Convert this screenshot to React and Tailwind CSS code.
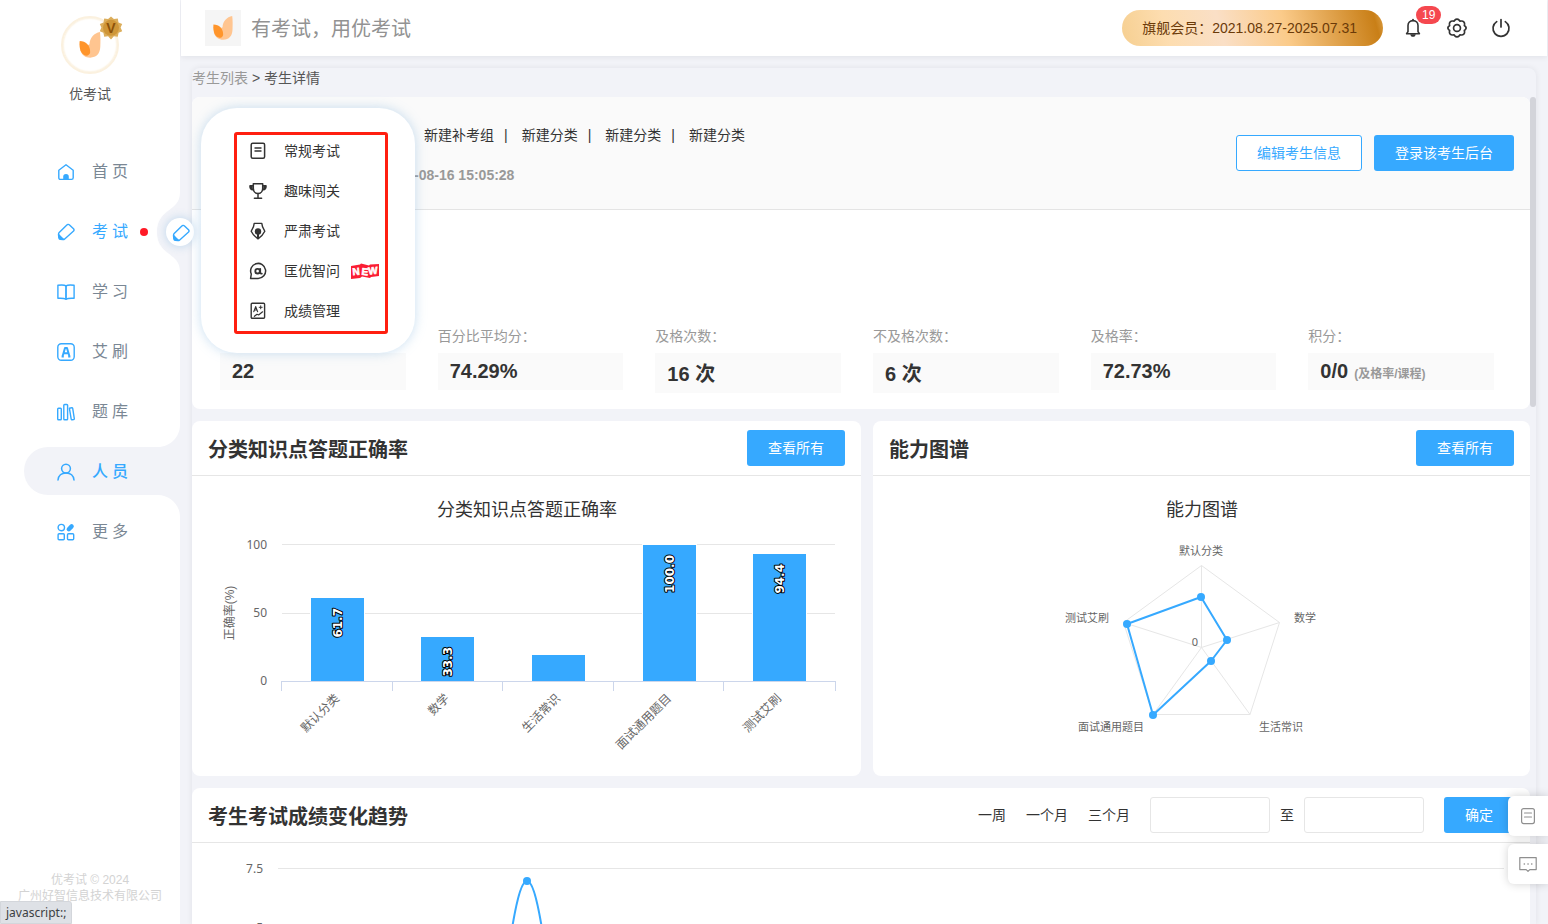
const navItems = [
  { id: 'home', label: '首页', icon: HomeIcon },
  { id: 'exam', label: '考试', icon: TagIcon },
  { id: 'study', label: '学习', icon: BookIcon },
  { id: 'aishua', label: '艾刷', icon: LetterIcon },
  { id: 'bank', label: '题库', icon: LibraryIcon },
  { id: 'people', label: '人员', icon: UserIcon },
  { id: 'more', label: '更多', icon: MoreIcon },
];

const menuItems = [
  { label: '常规考试', icon: PaperIcon },
  { label: '趣味闯关', icon: TrophyIcon },
  { label: '严肃考试', icon: NibIcon },
  { label: '匡优智问', icon: AskIcon, isNew: true },
  { label: '成绩管理', icon: GradeIcon },
];

const stats = [
  { label: '', value: '22' },
  { label: '百分比平均分：', value: '74.29%' },
  { label: '及格次数：', value: '16 次' },
  { label: '不及格次数：', value: '6 次' },
  { label: '及格率：', value: '72.73%' },
  { label: '积分：', value: '0/0', note: '(及格率/课程)' },
];

const bars = [
  { name: '默认分类', x: 119, top: 122, value: '61.7' },
  { name: '数学', x: 229, top: 161, value: '33.3' },
  { name: '生活常识', x: 340, top: 179, value: '' },
  { name: '面试通用题目', x: 451, top: 69, value: '100.0' },
  { name: '测试艾刷', x: 561, top: 78, value: '94.4' },
];

const tickXs = [89.5, 200.5, 310.5, 421.5, 531.5, 643.5];

const radarCorners = [[328.5, 89.5], [406.5, 146.5], [377, 238.5], [280, 238.5], [250.5, 146.5]];
const radarPoints = [[328, 121], [354, 164], [338, 185], [280, 239], [254, 148]];

/* ---------- icons ---------- */

function Line({ children, size = 18, width = 1.4 }) {
  return (
    <svg width={size} height={size} viewBox="0 0 18 18" fill="none" stroke="currentColor" strokeWidth={width} strokeLinecap="round" strokeLinejoin="round" className="shrink-0" aria-hidden="true">
      {children}
    </svg>
  );
}

function HomeIcon() {
  return (
    <Line>
      <path d="M1.8 7.2 9 1.8l7.2 5.4v7.6c0 1-.6 1.6-1.6 1.6H3.4c-1 0-1.6-.6-1.6-1.6z" />
      <path d="M6.2 16.4v-2.6a2.8 2.8 0 0 1 5.6 0v2.6z" fill="currentColor" stroke="none" />
    </Line>
  );
}

function TagIcon() {
  return (
    <Line>
      <path d="M9.6 2.3 2.2 9.6c-.6.6-.7 1.3-.7 2l.4 3.3c.1.9.6 1.4 1.5 1.5l2.4.2c.7 0 1.3-.1 1.9-.7l8.6-7.6c.9-.8.9-1.700.2-2.500l-4-3.900c-.8-.8-2-.8-2.900.4z" />
      <path d="M1.500 10.300c1.600 2 3.600 4.200 6 6-1.600.9-3.200 1-4.600.4C1.300 16 1 13 1.500 10.300z" fill="currentColor" stroke="none" />
    </Line>
  );
}

function BookIcon() {
  return (
    <Line>
      <path d="M9 2.800C7.800 2 4.500 1.800 .9 2.200V15.300c3.600-.2 6.600 0 8.100.9 1.500-.9 4.500-1.100 8.100-.9V2.200C13.500 1.800 10.200 2 9 2.800z" />
      <path d="M9 2.800v13.200" strokeWidth="1.800" />
    </Line>
  );
}

function LetterIcon() {
  return (
    <Line>
      <rect x="0.800" y="0.800" width="16.400" height="16.400" rx="3.500" />
      <path d="M5.600 13.200 8 5h2l2.400 8.200M6.800 10.200h4.400M4.600 13.400h2.200M11.200 13.400h2.200" strokeWidth="2" strokeLinecap="butt" />
    </Line>
  );
}

function LibraryIcon() {
  return (
    <Line width={1.4}>
      <rect x="0.700" y="5.200" width="3.600" height="11.500" rx="0.800" />
      <rect x="6.800" y="1.500" width="3.800" height="15.200" rx="0.800" />
      <path d="m12.400 5.300 2.400-.5c.5-.1.800.1.900.6l1.600 10.200c.1.500-.1.800-.6.900l-1.600.2c-.5.100-.8-.1-.9-.6L12.400 5.300z" />
    </Line>
  );
}

function UserIcon() {
  return (
    <Line width={1.5}>
      <circle cx="9" cy="5.600" r="4.400" />
      <path d="M1 17c.5-4.200 3.500-7 8-7s7.500 2.800 8 7" />
    </Line>
  );
}

function MoreIcon() {
  return (
    <Line>
      <circle cx="4.300" cy="4.600" r="3.200" />
      <rect x="1.100" y="10.700" width="6.200" height="6" rx="1" />
      <rect x="10.500" y="10.700" width="6.200" height="6" rx="1" />
      <path d="m11.800 6.200 2.800-2.800" strokeWidth="4.400" />
    </Line>
  );
}

function PaperIcon() {
  return (
    <Line width={1.5}>
      <rect x="2.200" y="1.300" width="13.400" height="15" rx="1.500" />
      <path d="M5.500 6h7M5.500 9h7" strokeLinecap="butt" />
    </Line>
  );
}

function TrophyIcon() {
  return (
    <Line width={1.5}>
      <path d="M4.300 1.800h9.400v4.400c0 3-2 5.400-4.700 5.400S4.300 9.200 4.300 6.200z" />
      <path d="M9 11.600v4M5.400 16.300h7.200" />
      <path d="M3.600 3.800H1c-.2 2.200.8 3.700 2.900 4M14.400 3.800H17c.2 2.200-.8 3.700-2.900 4" fill="currentColor" />
    </Line>
  );
}

function NibIcon() {
  return (
    <Line width={1.4}>
      <path d="M5.200 1.400h7.600l.7 3.200 2.300 4.600c-1.300 2.800-3.600 5.300-6.800 7.700-3.200-2.400-5.500-4.900-6.800-7.700l2.300-4.600z" />
      <circle cx="9" cy="9.500" r="3.200" fill="currentColor" stroke="none" />
      <path d="M9 10v6" strokeWidth="2" />
    </Line>
  );
}

function AskIcon() {
  return (
    <Line width={1.5}>
      <path d="M1.600 16.400h7.600A7.500 7.500 0 1 0 2.300 12z" />
      <circle cx="8.600" cy="9.200" r="2.300" strokeWidth="1.900" />
      <path d="M11.200 6.800v3.400c0 1 .6 1.500 1.600 1.400" strokeWidth="1.800" />
    </Line>
  );
}

function GradeIcon() {
  return (
    <Line width={1.4}>
      <rect x="2.200" y="1.300" width="13.400" height="15" rx="1" />
      <path d="m4.800 9.600 1.900-5 1.900 5M5.500 8h2.500" strokeWidth="1.200" />
      <path d="M10.200 5.300h3M11.700 3.800v3" strokeWidth="1" />
      <path d="m5.400 14.300 2.600-2 1.600.7 4-3.200" strokeWidth="1.200" />
    </Line>
  );
}

function BellIcon() {
  return (
    <svg width="20" height="20" viewBox="0 0 20 20" fill="none" stroke="currentColor" strokeWidth="1.600" strokeLinejoin="round" strokeLinecap="round" aria-hidden="true">
      <path d="M10 2.600c-3.100 0-5 2.200-5 5v6L3.600 15.800h12.800L15 13.600v-6c0-2.800-1.900-5-5-5z" />
      <path d="M10 1.500v1" />
      <path d="M7.200 16.200h5.600c-.3 1.700-1.300 2.600-2.800 2.600s-2.500-.9-2.800-2.600z" fill="currentColor" stroke="none" />
    </svg>
  );
}

function GearIcon() {
  return (
    <svg width="20" height="20" viewBox="1 1 18 18" fill="none" stroke="currentColor" strokeWidth="1.500" strokeLinejoin="round" aria-hidden="true">
      <path d="M8.100 2.900a2.600 2.600 0 0 1 3.800 0l.8.9 1.300-.1a2.600 2.600 0 0 1 2.800 2.900l-.2 1.200.9.800a2 2 0 0 1 0 2.800l-.9.800.2 1.200a2.600 2.600 0 0 1-2.800 2.900l-1.300-.1-.8.900a2.600 2.600 0 0 1-3.800 0l-.8-.9-1.300.1a2.600 2.600 0 0 1-2.800-2.900l.2-1.200-.9-.8a2 2 0 0 1 0-2.800l.9-.8-.2-1.200A2.600 2.600 0 0 1 6 3.700l1.300.1z" />
      <circle cx="10" cy="10" r="3.100" />
    </svg>
  );
}

function PowerIcon() {
  return (
    <svg width="20" height="20" viewBox="0 0 20 20" fill="none" stroke="currentColor" strokeWidth="1.700" strokeLinecap="round" aria-hidden="true">
      <path d="M10 1.500v7.500M5.700 3.600a8 8 0 1 0 8.600 0" />
    </svg>
  );
}

function Petals({ className }) {
  return (
    <svg viewBox="0 0 63 77" className={className} aria-hidden="true">
      <path d="M61 0C44 3 31 17 30 36L2 52c5 18 16 24 30 24 19 0 29-12 30-32 .6-14 1-30-1-44z" fill="#ffc590" />
      <path d="M1 27c18 0 31 13 31 32 0 6-5 11-12 11C6 68-2 50 1 27z" fill="#ff952b" />
    </svg>
  );
}

function Medal() {
  return (
    <svg width="24" height="24" viewBox="0 0 24 24" className="absolute -right-1.5 -top-0.5" aria-hidden="true">
      <path d="m12 .5 2.900 2.600 3.900-.5.700 3.900 3.700 1.400-1.600 3.600 1.600 3.800-3.600 1.500-.8 3.900-3.900-.4L12 23.500l-2.900-3.200-3.900.4-.8-3.900L.8 15.300l1.600-3.800L.8 7.900l3.700-1.400.7-3.900 3.900.5z" fill="#dcae5c" />
      <circle cx="12" cy="11.800" r="8" fill="#cf9638" />
      <text x="12" y="17" textAnchor="middle" fontSize="14" fontWeight="700" fill="#8c5209">V</text>
    </svg>
  );
}

function NewBadge() {
  return (
    <svg width="30" height="18" viewBox="0 0 30 18" role="img" aria-label="NEW">
      <path d="m1 4 9-1.500 1-1 8 2 1-1 9-.5v12l-8 1-1 1-8-1.500-2 1.500-9 1z" fill="#fb1d33" />
      <g fill="#fff" stroke="#fff" strokeWidth="0.600" fontSize="10" fontWeight="700" textAnchor="middle" className="font-['Liberation_Sans',sans-serif]">
        <text x="6" y="13" transform="rotate(-5 6 9)">N</text>
        <text x="15" y="13" transform="rotate(6 15 9)">E</text>
        <text x="23" y="12" transform="rotate(-5 23 9)">W</text>
      </g>
    </svg>
  );
}

/* ---------- sidebar ---------- */

function ExamMenu() {
  return (
    <div className="absolute -top-[99px] left-[201px] h-[245px] w-[214px] rounded-[36px] bg-white px-[33px] py-6 shadow-[0_0_12px_rgba(120,175,220,0.400)]">
      <ul className="w-[154px] rounded-[3px] border-3 border-[#ff1f10]">
        {menuItems.map(({ label, icon: Icon, isNew }) => (
          <li key={label} className="h-10 first:-mt-1">
            <a href="#menu" className="flex h-full items-center pl-3 text-sm text-[#333]">
              <Icon />
              <span className="ml-[17px] mr-2.5">{label}</span>
              {isNew && <NewBadge />}
            </a>
          </li>
        ))}
      </ul>
    </div>
  );
}

function ExamKnob() {
  return (
    <>
      <svg width="24" height="80" viewBox="0 0 24 80" className="absolute -top-[15px] right-0" aria-hidden="true">
        <path d="M24 0c0 11-6 14-12 19C4 25 1 31 1 40s3 15 11 21c6 5 12 8 12 19z" fill="#f2f3f8" />
      </svg>
      <span className="absolute -right-3.5 top-[11px] flex size-7 items-center justify-center rounded-full bg-white pl-0.5 pt-0.5 text-[#36a9ff] shadow-[0_0_10px_rgba(120,175,220,0.450)]">
        <TagIcon />
      </span>
    </>
  );
}

function ActiveCorners() {
  return (
    <>
      <svg width="22" height="22" viewBox="0 0 22 22" className="absolute -top-[22px] right-0" aria-hidden="true">
        <path d="M22 0v22H0C12 22 22 12 22 0z" fill="#f2f3f8" />
      </svg>
      <svg width="22" height="22" viewBox="0 0 22 22" className="absolute -bottom-[22px] right-0" aria-hidden="true">
        <path d="M22 22V0H0c12 0 22 10 22 22z" fill="#f2f3f8" />
      </svg>
    </>
  );
}

function Sidebar() {
  return (
    <aside className="relative z-10 flex w-[180px] shrink-0 flex-col bg-white">
      <div className="flex flex-col items-center pt-4">
        <div className="relative flex size-[58px] items-center justify-center rounded-full border-2 border-[#fbf1df] shadow-[inset_0_0_2px_#f5dfb8]">
          <Petals className="h-[26px] w-[22px]" />
          <Medal />
        </div>
        <p className="mt-2.5 text-sm leading-5 text-[#555]">优考试</p>
      </div>

      <nav className="mt-[43px] flex flex-col gap-3">
        {navItems.map(({ id, label, icon: Icon }) => (
          <div key={id} className="relative h-12">
            <a
              href={`#${id}`}
              className={
                'ml-6 flex h-full items-center rounded-l-full pl-[33px] pt-0.5 tracking-[4px] ' +
                (id === 'people' ? 'bg-[#f2f3f8] font-medium text-[#36a9ff]' : id === 'exam' ? 'text-[#36a9ff]' : 'text-[#7a8794]')
              }
            >
              <span className="mr-[17px] text-[#36a9ff]"><Icon /></span>
              {label}
              {id === 'exam' && <span className="ml-2 size-2 rounded-full bg-[#ff1a26]" />}
            </a>
            {id === 'exam' && <ExamKnob />}
            {id === 'exam' && <ExamMenu />}
            {id === 'people' && <ActiveCorners />}
          </div>
        ))}
      </nav>

      <footer className="mt-auto pb-5 text-center text-xs text-[#d3d3d3]">
        <p>优考试 © 2024</p>
        <p>广州好智信息技术有限公司</p>
      </footer>
      <div className="fixed bottom-0 left-0 rounded-tr-[3px] border border-[#d3d6db] bg-[#dee1e6] px-[5px] pb-0.5 pt-[3px] font-['Noto_Sans',sans-serif] text-xs text-[#3c4043]">
        javascript:;
      </div>
    </aside>
  );
}

/* ---------- header ---------- */

function Header() {
  return (
    <header className="relative mx-px flex h-14 shrink-0 items-center bg-white pl-6 pr-9 shadow-[0_1px_6px_rgba(0,21,41,0.080)]">
      <div className="flex size-9 items-center justify-center bg-[#f5f5f5]">
        <Petals className="h-6 w-5" />
      </div>
      <h1 className="ml-2.5 pt-0.5 text-xl text-[#929292]">有考试，用优考试</h1>
      <div className="ml-auto rounded-full bg-[linear-gradient(75deg,#f6cf90_0%,#fdddb0_18%,#fadfc6_38%,#fbcb8a_62%,#c97f17_96%,#dda24a_100%)] py-2 pl-5 pr-[26px] text-sm leading-5 text-[#6b3a08]">
        旗舰会员：2021.08.27-2025.07.31
      </div>
      <div className="ml-5 flex gap-6 text-[#333]">
        <button type="button" className="relative" aria-label="消息">
          <BellIcon />
          <span className="absolute -top-3 left-[13px] rounded-full bg-[#f5484f] px-[6px] text-xs leading-[18px] text-white">19</span>
        </button>
        <button type="button" aria-label="设置"><GearIcon /></button>
        <button type="button" aria-label="退出"><PowerIcon /></button>
      </div>
    </header>
  );
}

/* ---------- content ---------- */

function CardHeader({ title, children }) {
  return (
    <div className="flex h-[55px] items-center justify-between border-b border-[#e6e6e6] px-4">
      <h2 className="pt-1 text-xl font-bold text-[#333]">{title}</h2>
      {children}
    </div>
  );
}

function PrimaryButton({ children }) {
  return (
    <button type="button" className="h-9 rounded-[3px] bg-[#36a9ff] px-[21px] text-sm text-white">
      {children}
    </button>
  );
}

function StudentCard() {
  return (
    <section className="overflow-hidden rounded-lg bg-white">
      <div className="flex h-[113px] items-start justify-between border-b border-[#e4e4e4] bg-[#fafafa] pl-[222px] pr-4">
        <div className="pt-7 text-sm text-[#333]">
          <p className="flex pl-2.5">
            <span>新建补考组</span>
            <span className="ml-2.5 mr-3.5">|</span>
            <span>新建分类</span>
            <span className="ml-2.5 mr-3.5">|</span>
            <span>新建分类</span>
            <span className="ml-2.5 mr-3.5">|</span>
            <span>新建分类</span>
          </p>
          <p className="mt-5 font-bold text-[#999]">-08-16 15:05:28</p>
        </div>
        <div className="flex gap-3 pt-[38px]">
          <button type="button" className="h-9 rounded-[3px] border border-[#36a9ff] bg-white px-5 text-sm text-[#36a9ff]">
            编辑考生信息
          </button>
          <PrimaryButton>登录该考生后台</PrimaryButton>
        </div>
      </div>
      <dl className="grid h-[199px] grid-cols-6 px-4 pt-[116px]">
        {stats.map(({ label, value, note }) => (
          <div key={value} className="pl-3 pr-5">
            <dt className="h-5 text-sm text-[#999]">{label}</dt>
            <dd
              className={
                'mt-[7px] flex items-center bg-[#fafafa] px-3 text-xl font-bold text-[#333] ' +
                (value.includes('次') ? 'h-10 pt-0.5' : 'h-[37px] pb-0.5')
              }
            >
              {value}
              {note && <span className="ml-1.5 pt-1.5 text-xs text-[#999]">{note}</span>}
            </dd>
          </div>
        ))}
      </dl>
    </section>
  );
}

function BarChart() {
  return (
    <svg viewBox="0 0 669 300" className="h-[300px] w-full" role="img" aria-label="分类知识点答题正确率">
      <text x="335" y="40" textAnchor="middle" fontSize="18" fill="#333">分类知识点答题正确率</text>
      <path d="M90 68.500h553M90 137.500h553" stroke="#e6e6e6" />
      <g fontSize="12" fill="#666" textAnchor="end" className="font-['Noto_Sans',sans-serif]">
        <text x="75" y="73">100</text>
        <text x="75" y="141">50</text>
        <text x="75" y="209">0</text>
      </g>
      <text transform="translate(42 137) rotate(-90)" textAnchor="middle" fontSize="12" fill="#666">正确率(%)</text>
      {bars.map(({ name, x, top, value }) => (
        <g key={name}>
          <rect x={x - 1} y={top - 1} width="55" height={206 - top} fill="#fff" />
          <rect x={x} y={top} width="53" height={205 - top} fill="#36a9ff" />
          <text
            transform={`translate(${x + 31} ${top + 10}) rotate(-90)`}
            textAnchor="end"
            fontSize="12"
            fontWeight="700"
            fill="#fff"
            stroke="#000"
            strokeWidth="2"
            strokeLinejoin="round"
            paintOrder="stroke"
            className="font-['DejaVu_Sans',sans-serif]"
          >
            {value}
          </text>
          <text transform={`translate(${x + 29} 223) rotate(-45)`} textAnchor="end" fontSize="12" fill="#666">{name}</text>
        </g>
      ))}
      <path d="M89 205.500h555" stroke="#ccd6eb" />
      {tickXs.map((x) => (
        <path key={x} d={`M${x} 205v10`} stroke="#ccd6eb" />
      ))}
    </svg>
  );
}

function RadarChart() {
  return (
    <svg viewBox="0 0 657 300" className="h-[300px] w-full" role="img" aria-label="能力图谱">
      <text x="329" y="40" textAnchor="middle" fontSize="18" fill="#333">能力图谱</text>
      <g fill="none" stroke="#e6e6e6">
        <polygon points={radarCorners.join(' ')} />
        {radarCorners.map(([x, y]) => (
          <path key={x} d={`M328.500 171.500 ${x} ${y}`} />
        ))}
      </g>
      <g fontSize="11" fill="#666">
        <text x="328" y="79" textAnchor="middle">默认分类</text>
        <text x="421" y="146">数学</text>
        <text x="386" y="255">生活常识</text>
        <text x="271" y="255" textAnchor="end">面试通用题目</text>
        <text x="236" y="146" textAnchor="end">测试艾刷</text>
        <text x="325" y="170" textAnchor="end" className="font-['Noto_Sans',sans-serif]">0</text>
      </g>
      <polygon points={radarPoints.join(' ')} fill="none" stroke="#36a9ff" strokeWidth="2" strokeLinejoin="round" />
      {radarPoints.map(([x, y]) => (
        <circle key={x} cx={x} cy={y} r="4" fill="#36a9ff" />
      ))}
    </svg>
  );
}

function TrendCard() {
  return (
    <section className="mt-3 rounded-t-lg bg-white">
      <CardHeader title="考生考试成绩变化趋势">
        <form className="flex items-center text-sm text-[#333]">
          <div className="mr-5 flex gap-5">
            <button type="button">一周</button>
            <button type="button">一个月</button>
            <button type="button">三个月</button>
          </div>
          <input type="text" aria-label="开始日期" className="h-9 w-[120px] rounded-[3px] border border-[#e6e6e6] px-2" />
          <span className="mx-2.5">至</span>
          <input type="text" aria-label="结束日期" className="mr-5 h-9 w-[120px] rounded-[3px] border border-[#e6e6e6] px-2" />
          <PrimaryButton>确定</PrimaryButton>
        </form>
      </CardHeader>
      <svg viewBox="0 0 1338 300" className="h-[300px] w-full" role="img" aria-label="考生考试成绩变化趋势">
        <path d="M86 25.500h1226M86 84.500h1226" stroke="#e6e6e6" />
        <g fontSize="12" fill="#666" textAnchor="end" className="font-['Noto_Sans',sans-serif]">
          <text x="71" y="30">7.5</text>
          <text x="71" y="89">5</text>
        </g>
        <path d="M316 112C323 62 329 38 335 38s12 24 19 74" fill="none" stroke="#36a9ff" strokeWidth="2" />
        <circle cx="335" cy="38" r="4" fill="#36a9ff" />
      </svg>
    </section>
  );
}

function FloatingTools() {
  return (
    <div className="fixed bottom-10 right-0 z-20 flex flex-col gap-2 text-[#8f8f8f]">
      <button type="button" aria-label="文档" className="flex size-10 items-center justify-center rounded-l-md bg-white shadow-[0_0_10px_rgba(0,0,0,0.180)]">
        <Line width={1.2}>
          <rect x="2.600" y="1.600" width="12.800" height="15" rx="2" />
          <path d="M5.500 6h7M5.500 10h7" />
        </Line>
      </button>
      <button type="button" aria-label="留言" className="flex size-10 items-center justify-center rounded-l-md bg-white shadow-[0_0_10px_rgba(0,0,0,0.180)]">
        <Line width={1.2}>
          <path d="M.8 2.600h16.400v12h-6.400L9 16.400l-1.800-1.800H.8z" />
          <path d="M5.300 9h.1M9 9h.1M12.700 9h.1" strokeWidth="1.600" />
        </Line>
      </button>
    </div>
  );
}

export default function App() {
  return (
    <div className="flex h-screen overflow-hidden bg-[#f2f3f8] font-['Liberation_Sans','Noto_Sans_CJK_SC',sans-serif]">
      <Sidebar />
      <div className="flex min-w-0 flex-1 flex-col">
        <Header />
        <main className="ml-3 mr-3 mt-3 flex min-h-0 flex-1 flex-col rounded-t-lg bg-[#f2f3f8] shadow-[0_0_6px_rgba(0,21,41,0.080)]">
          <div className="h-[29px] shrink-0 text-sm leading-5 text-[#555]">
            <a href="#list" className="text-[#999]">考生列表</a> &gt; 考生详情
          </div>
          <div className="flex min-h-0 flex-1 overflow-hidden">
            <div className="min-w-0 flex-1">
              <StudentCard />
              <div className="mt-3 flex">
                <section className="w-1/2 rounded-lg bg-white">
                  <CardHeader title="分类知识点答题正确率">
                    <PrimaryButton>查看所有</PrimaryButton>
                  </CardHeader>
                  <BarChart />
                </section>
                <div className="w-1/2 pl-3">
                  <section className="rounded-lg bg-white">
                    <CardHeader title="能力图谱">
                      <PrimaryButton>查看所有</PrimaryButton>
                    </CardHeader>
                    <RadarChart />
                  </section>
                </div>
              </div>
              <TrendCard />
            </div>
            <div className="w-1.5 shrink-0">
              <div className="h-[310px] rounded-full bg-[#d3d4da]" />
            </div>
          </div>
        </main>
      </div>
      <FloatingTools />
    </div>
  );
}
